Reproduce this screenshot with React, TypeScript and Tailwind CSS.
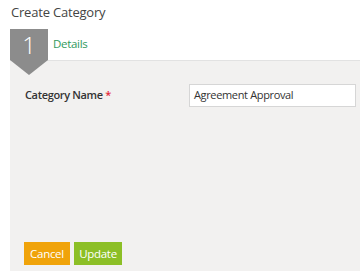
export default function App() {
	return (
		<div className="w-[360px] h-[271px] bg-white overflow-hidden font-['Open_Sans',sans-serif] text-[#333]">
			<div className="pl-[11px] pt-[3px] text-[13px] leading-[18px] text-[#444] tracking-[-0.2px]">Create Category</div>
			{/* step header */}
			<div className="ml-[10px] mt-[8px] h-[31px] flex items-center relative">
				<div className="absolute left-0 top-0 w-[38px] h-[46px] z-10">
					<svg width="38" height="46" viewBox="0 0 38 46">
						<polygon points="0,0 38,0 38,31 19,46 0,31" fill="#8c8c8c" />
					</svg>
					<span className="absolute inset-x-0 top-[1px] text-center text-white text-[24px] leading-[30px] font-light">1</span>
				</div>
				<span className="ml-[43px] text-[11.5px] text-[#2f9a5c] -mt-[2px] tracking-[-0.3px]">Details</span>
			</div>
			{/* panel */}
			<div className="ml-[10px] h-[211px] bg-[#f2f1f0] border-t border-[#e2e2e2] flex flex-col">
				<div className="flex items-center mt-[23px] pl-[15px] pr-[4px]">
					<label className="w-[164px] text-[11px] font-semibold text-[#333] tracking-[-0.35px]">
						Category Name <span className="text-[#e5293b]">*</span>
					</label>
					<div className="flex-1 h-[23px] bg-white border border-[#d6d6d6] flex items-center px-[4px] text-[11px] text-[#333] tracking-[-0.35px]">
						Agreement Approval
					</div>
				</div>
				<div className="mt-auto mb-[6px] ml-[14px] flex gap-[4px]">
					<button className="w-[46px] h-[23px] bg-[#f0a30a] text-white text-[11.5px] tracking-[-0.3px]">Cancel</button>
					<button className="w-[48px] h-[23px] bg-[#8cbf26] text-white text-[11.5px] tracking-[-0.3px]">Update</button>
				</div>
			</div>
		</div>
	);
}
